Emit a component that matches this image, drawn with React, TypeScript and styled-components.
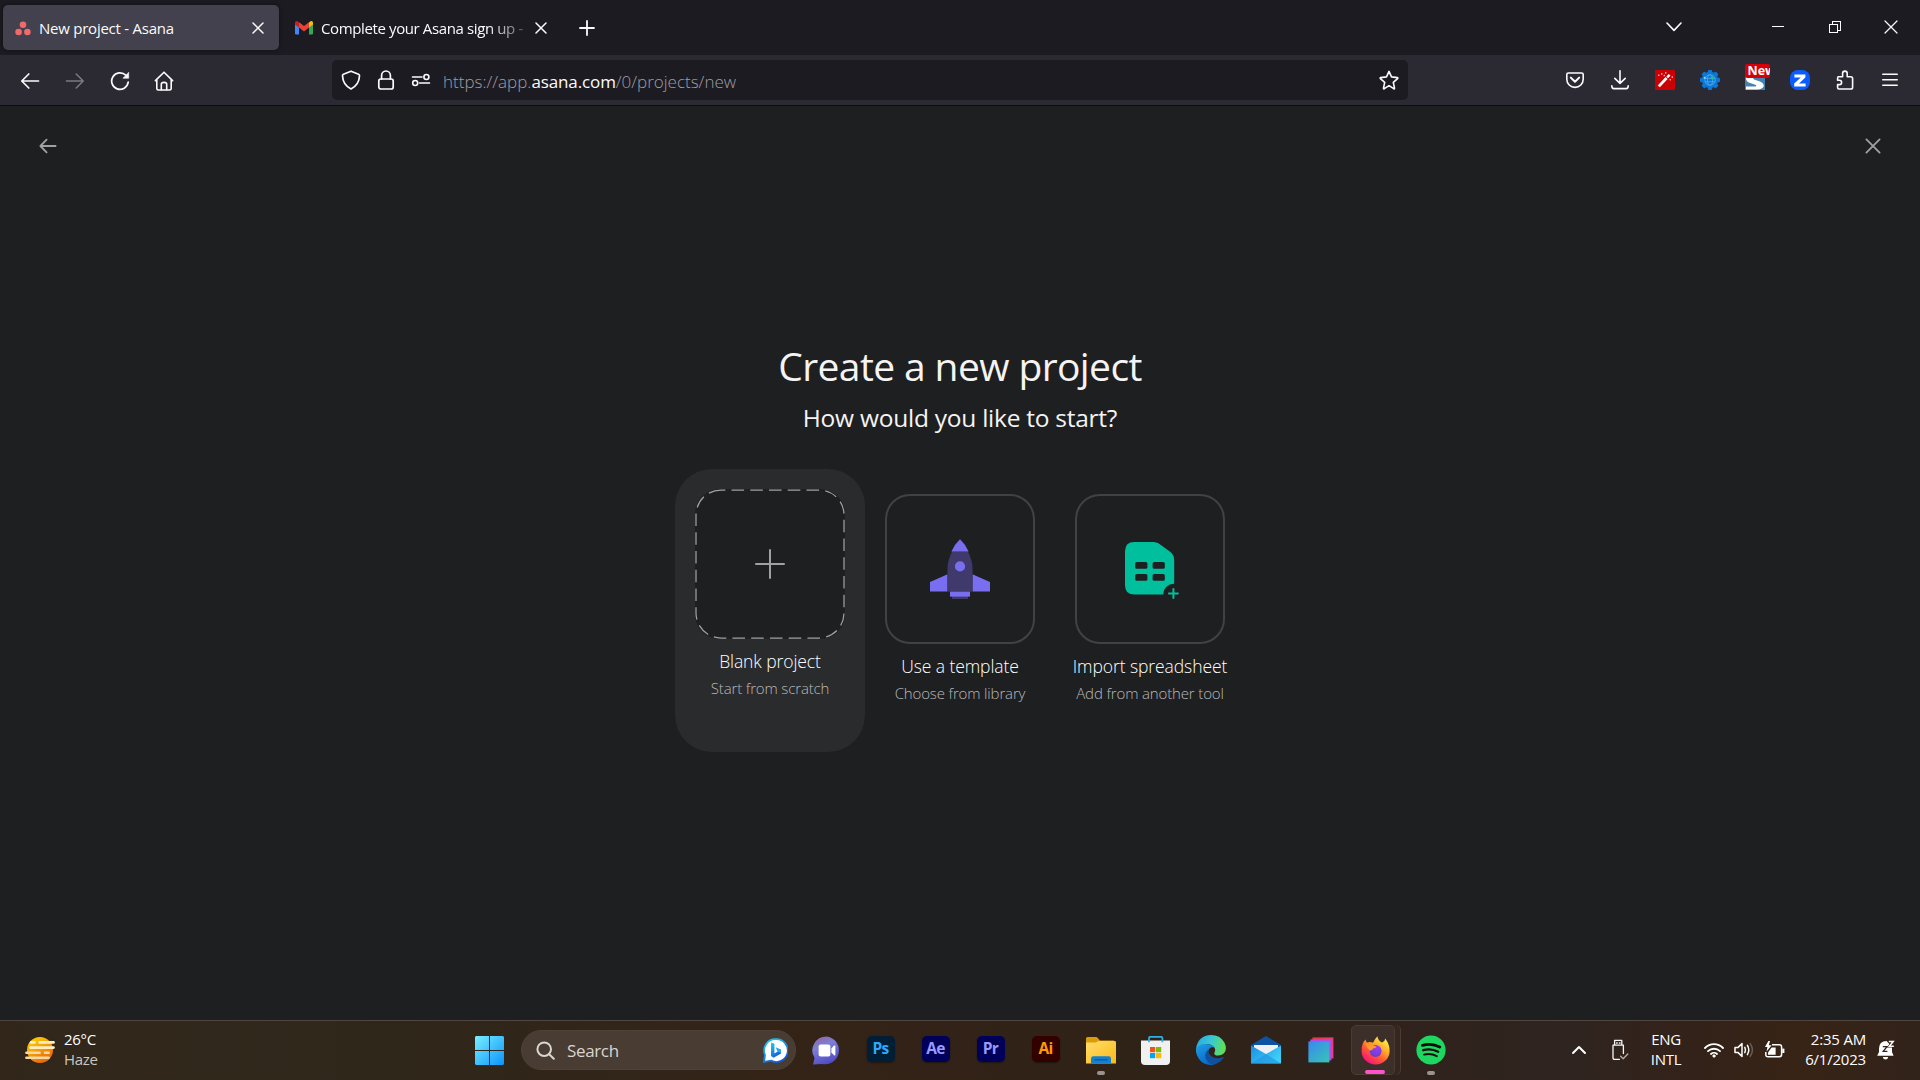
import React from "react";
import styled, { createGlobalStyle } from "styled-components";

const GlobalStyle = createGlobalStyle`
  * { box-sizing: border-box; }
  html, body { margin: 0; padding: 0; background: #1e1f21; }
  body {
    font-family: "Segoe UI", "Open Sans", "Noto Sans", sans-serif;
    color: #f5f4f3;
    overflow: hidden;
  }
  svg { display: block; flex: none; }
`;

const Screen = styled.div`
  width: 1920px;
  height: 1080px;
  display: flex;
  flex-direction: column;
  overflow: hidden;
`;

/* ---------- browser chrome ---------- */

const TabBar = styled.header`
  height: 55px;
  flex: none;
  display: flex;
  align-items: center;
  padding: 0 1px 0 3px;
  background: #1c1b22;
`;

const Tab = styled.div<{ $active?: boolean; $width: number; $inset?: number }>`
  width: ${(p) => p.$width}px;
  height: 45px;
  display: flex;
  align-items: center;
  padding: 0 11px 0 ${(p) => p.$inset ?? 12}px;
  border-radius: 5px;
  background: ${(p) => (p.$active ? "#42414d" : "transparent")};
  box-shadow: ${(p) => (p.$active ? "0 0 4px rgba(0, 0, 0, 0.5)" : "none")};
`;

const TabTitle = styled.span<{ $gap: number; $spacing: number; $fade?: boolean }>`
  flex: 1;
  min-width: 0;
  margin-left: ${(p) => p.$gap}px;
  padding-top: 1px;
  font-size: 15px;
  line-height: 24px;
  letter-spacing: ${(p) => p.$spacing}px;
  color: #fbfbfe;
  white-space: nowrap;
  overflow: hidden;
  mask-image: ${(p) => (p.$fade ? "linear-gradient(to right, #000 80%, transparent 103%)" : "none")};
`;

const ChromeButton = styled.button<{ $width: number; $color?: string }>`
  width: ${(p) => p.$width}px;
  height: 40px;
  flex: none;
  display: flex;
  align-items: center;
  justify-content: center;
  padding: 0;
  border: 0;
  background: none;
  color: ${(p) => p.$color ?? "#fbfbfe"};
`;

const WindowControls = styled.div`
  flex: 1;
  display: flex;
  justify-content: flex-end;
  padding-bottom: 1px;
`;

const Toolbar = styled.nav`
  height: 51px;
  flex: none;
  display: flex;
  align-items: center;
  padding: 0 8px 0 7px;
  background: #2b2a33;
  border-bottom: 1px solid #0c0c0d;
`;

const Navigation = styled.div`
  width: 325px;
  display: flex;
  padding-top: 1px;
`;

const AddressBar = styled.div`
  width: 1076px;
  height: 40px;
  display: flex;
  align-items: center;
  padding: 0 1px 0 1px;
  border-radius: 5px;
  background: #1c1b22;
`;

const Url = styled.span`
  flex: 1;
  margin-left: 5px;
  padding-top: 4px;
  font-size: 17px;
  line-height: 24px;
  font-weight: 300;
  letter-spacing: 0;
  color: #9f9ea5;
  white-space: nowrap;

  b {
    font-weight: 400;
    letter-spacing: -0.12px;
    color: #fbfbfe;
  }
`;

const Extensions = styled.div`
  flex: 1;
  display: flex;
  justify-content: flex-end;
`;

const NewTile = styled.div`
  position: relative;
  width: 20px;
  height: 20px;
`;

const NewBadge = styled.span`
  position: absolute;
  left: 0;
  top: -6px;
  width: 25px;
  height: 14px;
  padding-left: 3px;
  overflow: hidden;
  border-radius: 2px;
  background: #d70007;
  color: #fff;
  font: 700 12.5px/13px "Open Sans", sans-serif;
  text-align: left;
`;

/* ---------- page ---------- */

const Page = styled.main`
  flex: 1;
  display: flex;
  flex-direction: column;
  align-items: center;
  background: #1e1f21;
`;

const PageHeader = styled.div`
  width: 100%;
  height: 80px;
  display: flex;
  justify-content: space-between;
  align-items: center;
  padding: 0 37px 0 38px;
  color: #a2a0a2;
`;

const Title = styled.h1`
  margin: 152px 0 0;
  font-size: 39px;
  line-height: 56px;
  font-weight: 400;
  letter-spacing: -0.6px;
  white-space: nowrap;
`;

const Subtitle = styled.h2`
  margin: 7px 0 0;
  font-size: 24.5px;
  line-height: 34px;
  font-weight: 400;
  letter-spacing: -0.25px;
  white-space: nowrap;
`;

const Options = styled.div`
  display: flex;
  align-items: flex-start;
  margin-top: 39px;
`;

const Option = styled.div<{ $hovered?: boolean }>`
  width: 190px;
  height: 283px;
  display: flex;
  flex-direction: column;
  align-items: center;
  padding-top: 20px;
  margin-top: ${(p) => (p.$hovered ? "-5px" : "0")};
  border-radius: 37px;
  background: ${(p) => (p.$hovered ? "#2a2b2d" : "transparent")};
`;

const Tile = styled.div<{ $outlined?: boolean }>`
  position: relative;
  width: 150px;
  height: 150px;
  display: flex;
  align-items: center;
  justify-content: center;
  border-radius: 25px;
  background: #1e1f21;
  border: ${(p) => (p.$outlined ? "2px solid #424244" : "0")};
`;

const DashedOutline = styled.svg`
  position: absolute;
  inset: 0;
`;

const OptionName = styled.div`
  margin-top: 10px;
  font-size: 17.5px;
  line-height: 24px;
  font-weight: 300;
  color: #fff;
  letter-spacing: -0.08px;
  white-space: nowrap;
`;

const OptionHint = styled.div`
  margin-top: 4px;
  font-size: 15px;
  line-height: 22px;
  font-weight: 300;
  letter-spacing: -0.14px;
  color: #bab8ba;
  white-space: nowrap;
`;

/* ---------- taskbar ---------- */

const Taskbar = styled.footer`
  height: 60px;
  flex: none;
  display: flex;
  align-items: center;
  padding-bottom: 1px;
  border-top: 1px solid #51463f;
  background: linear-gradient(
    90deg,
    #32261a 0,
    #2f281b 250px,
    #30261a 450px,
    #342317 850px,
    #2f2217 1150px,
    #30221c 1400px,
    #2f2420 1560px,
    #332219 1700px,
    #372416 1800px,
    #31221a 1920px
  );
`;

const Weather = styled.div`
  width: 462px;
  display: flex;
  align-items: center;
  padding-left: 25px;
  gap: 9px;
`;

const Stack = styled.div<{ $align?: string; $width?: number; $spacing?: number }>`
  width: ${(p) => (p.$width ? p.$width + "px" : "auto")};
  display: flex;
  flex-direction: column;
  align-items: ${(p) => p.$align ?? "flex-start"};
  padding-bottom: 3px;
  font-size: 15px;
  line-height: 20px;
  letter-spacing: ${(p) => p.$spacing ?? 0}px;
  color: #fff;
  white-space: nowrap;
`;

const Muted = styled.span`
  color: #cbc6c0;
`;

const TaskButton = styled.div<{ $width?: number }>`
  position: relative;
  width: ${(p) => p.$width ?? 55}px;
  height: 50px;
  flex: none;
  display: flex;
  align-items: center;
  justify-content: center;
`;

const SearchBox = styled.div`
  width: 275px;
  height: 40px;
  margin: 0 3px 0 4px;
  flex: none;
  display: flex;
  align-items: center;
  padding: 0 7px 0 14px;
  border-radius: 20px;
  background: #493c32;
  border: 1px solid #4e4238;
  color: #d9d5d0;
  font-size: 17px;
  letter-spacing: -0.35px;

  span {
    flex: 1;
    margin-left: 12px;
  }
`;

const AdobeTile = styled.div<{ $bg: string; $fg: string }>`
  width: 28px;
  height: 26px;
  margin-top: -3px;
  display: flex;
  justify-content: center;
  border-radius: 5px;
  background: ${(p) => p.$bg};
  color: ${(p) => p.$fg};
  box-shadow: 0 1px 2px rgba(0, 0, 0, 0.4);
  font-size: 15.5px;
  line-height: 24px;
  font-weight: 700;
  letter-spacing: -0.6px;
`;

const Indicator = styled.i<{ $active?: boolean }>`
  position: absolute;
  left: ${(p) => (p.$active ? "56%" : "50%")};
  bottom: 0;
  width: ${(p) => (p.$active ? 20 : 8)}px;
  height: 4px;
  transform: translateX(-50%);
  border-radius: 2px;
  background: ${(p) => (p.$active ? "#ff52cb" : "#9b948e")};
`;

const ActiveFrame = styled.div`
  position: relative;
  width: 44px;
  height: 50px;
  margin: 0 8px 0 2px;
  padding-left: 5px;
  display: flex;
  align-items: center;
  justify-content: center;
  border-radius: 5px;
  border: 1px solid #4a3c35;
  background: #3c2f29;
  box-shadow: 5px 0 0 0 #33271f, 6px 0 0 0 #4a3c35;
`;

const Tray = styled.div`
  flex: 1;
  display: flex;
  align-items: center;
  justify-content: flex-end;
  padding-right: 25px;
`;

const TrayIcon = styled.div<{ $gap: number }>`
  margin-right: ${(p) => p.$gap}px;
  flex: none;
`;

/* ---------- line icons ---------- */

type LineProps = { w: number; h?: number; sw?: number; children: React.ReactNode; color?: string };

const Line = ({ w, h = w, sw = 1.6, color = "currentColor", children }: LineProps) => (
  <svg width={w} height={h} viewBox={`0 0 ${w} ${h}`} fill="none" stroke={color} strokeWidth={sw} strokeLinecap="round" strokeLinejoin="round">
    {children}
  </svg>
);

const Cross = ({ size, sw = 1.5 }: { size: number; sw?: number }) => (
  <Line w={size} sw={sw}>
    <path d={`M1 1L${size - 1} ${size - 1}M${size - 1} 1L1 ${size - 1}`} />
  </Line>
);

const ArrowLeft = () => (
  <Line w={20} sw={1.7}>
    <path d="M1.8 10H18.5M8.8 3L1.8 10L8.8 17" />
  </Line>
);

const ArrowRight = () => (
  <Line w={20} sw={1.5}>
    <path d="M1.5 10H18.2M11.2 3L18.2 10L11.2 17" />
  </Line>
);

const Reload = () => (
  <Line w={20} sw={1.7}>
    <path d="M18.2 11.2A8.3 8.3 0 1 1 15.8 4.2" />
    <path d="M18.7 1.6V7.2H13.2Z" fill="currentColor" strokeWidth={0.6} />
  </Line>
);

const Home = () => (
  <Line w={20} sw={1.6}>
    <path d="M1.4 9.6L10 1.2L18.6 9.6M2.8 8.4V17.4Q2.8 19 4.4 19H15.6Q17.2 19 17.2 17.4V8.4" />
    <path d="M7.3 18.8V13.2Q7.3 11.4 10 11.4Q12.7 11.4 12.7 13.2V18.8" />
  </Line>
);

const Shield = () => (
  <Line w={20} sw={1.7}>
    <path d="M10 1.2L17.6 4.2Q18.6 4.6 18.5 5.8Q18.2 14.8 10 19Q1.8 14.8 1.5 5.8Q1.4 4.6 2.4 4.2Z" />
  </Line>
);

const Lock = () => (
  <Line w={20} sw={1.7}>
    <rect x="2.8" y="9" width="14.4" height="10" rx="2" />
    <path d="M5.6 9V5.4A4.4 4.4 0 0 1 14.4 5.4V9" />
  </Line>
);

const Permissions = () => (
  <Line w={20} sw={1.6}>
    <path d="M1.5 7H11M8.5 13H18.5" />
    <circle cx="15.4" cy="7" r="2.5" />
    <circle cx="4.2" cy="13" r="2.5" />
  </Line>
);

const Star = () => (
  <Line w={20} sw={1.6}>
    <path d="M10 1.4L12.5 6.9L18.4 7.6Q19.2 7.9 18.6 8.6L14.3 12.4L15.5 18.2Q15.5 19.1 14.7 18.7L10 15.7L5.3 18.7Q4.5 19.1 4.5 18.2L5.7 12.4L1.4 8.6Q.8 7.9 1.6 7.6L7.5 6.9Z" />
  </Line>
);

const Pocket = () => (
  <Line w={20} sw={1.6}>
    <path d="M3.4 3H16.6Q18.2 3 18.2 4.6V9.2A8.2 8.2 0 0 1 1.8 9.2V4.6Q1.8 3 3.4 3Z" />
    <path d="M5.8 7.6L10 11.8L14.2 7.6" strokeWidth={2} />
  </Line>
);

const Download = () => (
  <Line w={20} sw={1.6}>
    <path d="M10 .8V13.4M4.8 8.4L10 13.4L15.2 8.4M1.8 15.8Q1.8 18.6 3.8 18.6H16.2Q18.2 18.6 18.2 15.8" />
  </Line>
);

const Wand = () => (
  <svg width="20" height="20" viewBox="0 0 20 20">
    <rect width="20" height="20" rx="1" fill="#c90004" />
    <path d="M3.8 16.4L11.6 8" stroke="#fff" strokeWidth="2.8" />
    <path d="M12.2 7.4L14.6 4.8" stroke="#fff" strokeWidth="2.4" />
    <g fill="#fbb">
      <rect x="3" y="4.6" width="1.4" height="1.4" />
      <rect x="6" y="3.2" width="1.4" height="1.4" />
      <rect x="8.6" y="4.8" width="1.4" height="1.4" />
      <rect x="10" y="2.2" width="1.4" height="1.4" />
      <rect x="16.6" y="6.4" width="1.4" height="1.4" />
      <rect x="14.6" y="9" width="1.4" height="1.4" />
    </g>
  </svg>
);

const GearGlobe = () => (
  <svg width="20" height="20" viewBox="0 0 20 20">
    <g fill="#0b77d6">
      <circle cx="10" cy="10" r="8.2" />
      {[0, 45, 90, 135].map((a) => (
        <rect key={a} x="7.8" y="0" width="4.4" height="20" rx="1" transform={`rotate(${a} 10 10)`} />
      ))}
    </g>
    <g fill="none" stroke="#4aa6ea" strokeWidth="0.9">
      <circle cx="10" cy="10" r="5.2" />
      <path d="M4.8 8.4H15.2M4.8 11.8H15.2" />
      <ellipse cx="10" cy="10" rx="2.6" ry="5.2" />
    </g>
    <circle cx="12" cy="7.8" r="1.4" fill="#25c76a" />
    <circle cx="4.6" cy="7.8" r="1" fill="#8fe0ff" />
  </svg>
);

const SurfLetter = () => (
  <svg width="20" height="20" viewBox="0 0 20 20">
    <rect width="20" height="20" fill="#4682b0" />
    <path d="M1 6H19V8H8.6Q7.4 8.4 9 9.6L15 11.6Q19.4 13.4 18.6 16.6Q17.4 19.4 12.6 19.4H1V16.6H10.2Q12.4 16.2 10.4 14.8L4.4 12.8Q.8 11.2 1 8Z" fill="#fff" />
  </svg>
);

const ZBadge = () => (
  <svg width="20" height="20" viewBox="0 0 20 20">
    <rect width="20" height="20" rx="8" fill="#0b5cff" />
    <path d="M4.4 4.4H15.4V7.4L9 13.4H15.6V16.4H4.2V13.4L10.8 7.4H4.4Z" fill="#fff" />
  </svg>
);

const Puzzle = () => (
  <Line w={20} sw={1.6}>
    <path d="M3.4 6.8H7.6V3.4A2.3 2.3 0 0 1 12.2 3.4V6.8H15.8Q17.6 6.8 17.6 8.6V17.2Q17.6 19 15.8 19H4Q2.6 19 2.6 17.6V14.6H4.4A2.2 2.2 0 0 0 4.4 10.2H2.6V8.2Q2.6 6.8 3.4 6.8Z" />
  </Line>
);

const Menu = () => (
  <Line w={20} sw={1.6}>
    <path d="M2.8 4.2H17.2M2.8 9.7H17.2M2.8 15.2H17.2" />
  </Line>
);

/* ---------- page drawings ---------- */

const AsanaMark = () => (
  <svg width="16" height="16" viewBox="0 0 16 16" fill="#f06a6a">
    <circle cx="8" cy="4.8" r="3.3" />
    <circle cx="3.6" cy="12" r="3.3" />
    <circle cx="12.4" cy="12" r="3.3" />
  </svg>
);

const GmailMark = () => (
  <svg width="20" height="16" viewBox="0 0 20 16">
    <path d="M1 2.2V13.2Q1 14.6 2.4 14.6H5V5.4Z" fill="#4285f4" />
    <path d="M19 2.2V13.2Q19 14.6 17.6 14.6H15V5.4Z" fill="#34a853" />
    <path d="M15 2.4V7.6L19 4.6V2.8Q18.8 .4 16.4 1.2Z" fill="#fbbc04" />
    <path d="M5 2.4V7.6L1 4.6V2.8Q1.2 .4 3.6 1.2Z" fill="#c5221f" />
    <path d="M5 2.2L10 6L15 2.2V7.6L10 11.4L5 7.6Z" fill="#ea4335" />
  </svg>
);

const Rocket = () => (
  <svg width="60" height="60" viewBox="0 0 60 60">
    <path d="M17.6 35.2L0 43V52.4H17.6ZM42.4 35.2L60 43V52.4H42.4Z" fill="#796eef" />
    <path d="M22 12.4H38Q42.6 22 42.6 30V52.4H17.4V30Q17.4 22 22 12.4Z" fill="#3f3a6b" />
    <path d="M30 .2Q35.6 5.4 38.6 12.4H21.4Q24.4 5.4 30 .2Z" fill="#796eef" />
    <circle cx="30" cy="27.4" r="5.1" fill="#796eef" />
    <rect x="22" y="57" width="16" height="3" fill="#3f3a6b" />
    <rect x="20" y="52.6" width="20" height="5" fill="#796eef" />
  </svg>
);

const Spreadsheet = () => (
  <svg width="60" height="60" viewBox="0 0 60 60">
    <path d="M14.4 3H33.6Q36.6 3 38.8 4.6L49.8 12.4Q54.2 15.8 54.2 20.4V44.8A10.4 10.4 0 0 0 43.4 55.6H14.4Q5 55.6 5 46.2V12.4Q5 3 14.4 3Z" fill="#00bf9c" />
    <g fill="#1e1f21">
      <rect x="15.2" y="23" width="12.2" height="6.8" rx="1.6" />
      <rect x="32.6" y="23" width="12.2" height="6.8" rx="1.6" />
      <rect x="15.2" y="35" width="12.2" height="6.8" rx="1.6" />
      <rect x="32.6" y="35" width="12.2" height="6.8" rx="1.6" />
    </g>
    <path d="M53.4 50V59M48.9 54.5H57.9" stroke="#00bf9c" strokeWidth="2" strokeLinecap="round" />
  </svg>
);

/* ---------- taskbar drawings ---------- */

const HazeIcon = () => (
  <svg width="30" height="30" viewBox="0 0 30 30">
    <defs>
      <linearGradient id="sun" x1="0.2" y1="0" x2="0.8" y2="1">
        <stop offset="0.1" stopColor="#fcc607" />
        <stop offset="1" stopColor="#ea5c0b" />
      </linearGradient>
    </defs>
    <circle cx="15" cy="15" r="13" fill="url(#sun)" />
    <g strokeWidth="2.6" strokeLinecap="round">
      <path d="M6 7.4H9.6M14.6 7.4H28.6M5.4 12.6H28.6" stroke="#fdeec2" />
      <path d="M1.4 17.8H14.6M20 17.8H23.6M1.4 22.8H23.6" stroke="#f3d9a4" />
    </g>
  </svg>
);

const WindowsLogo = () => (
  <svg width="29" height="29" viewBox="0 0 29 29">
    <defs>
      <linearGradient id="win" x1="0" y1="0" x2="1" y2="1">
        <stop offset="0" stopColor="#78eeff" />
        <stop offset="1" stopColor="#0a94fb" />
      </linearGradient>
    </defs>
    <path d="M1 0H14V14H0V1ZM15 0H28L29 1V14H15ZM0 15H14V29H1L0 28ZM15 15H29V28L28 29H15Z" fill="url(#win)" />
  </svg>
);

const SearchGlass = () => (
  <Line w={19} sw={2}>
    <circle cx="8.2" cy="8.2" r="6.8" />
    <path d="M13.2 13.2L17.8 17.8" />
  </Line>
);

const BingIcon = () => (
  <svg width="25" height="25" viewBox="0 0 25 25">
    <defs>
      <linearGradient id="bing" x1="0" y1="0" x2="0.6" y2="1">
        <stop offset="0" stopColor="#1fd0ec" />
        <stop offset="1" stopColor="#1559d6" />
      </linearGradient>
    </defs>
    <path d="M12.6 1.2A11.4 11.4 0 1 1 8 22.6L1 24L2 17A11.4 11.4 0 0 1 12.6 1.2Z" fill="#fff" stroke="url(#bing)" strokeWidth="1.8" />
    <path d="M8 4.4L11.4 5.8V15.4L18 11.6V15.6L10.6 19.8L8 18Z" fill="url(#bing)" />
    <path d="M12.8 9.2L18 11.6V15L14.4 13.4Z" fill="#2aa6ee" />
  </svg>
);

const ChatIcon = () => (
  <svg width="29" height="29" viewBox="0 0 29 29">
    <defs>
      <linearGradient id="chat" x1="0.2" y1="0" x2="0.6" y2="1">
        <stop offset="0" stopColor="#94659f" />
        <stop offset="0.35" stopColor="#7c7fd8" />
        <stop offset="1" stopColor="#4f49c4" />
      </linearGradient>
    </defs>
    <path d="M14.5 .4A14 14 0 1 1 10 28L1 28.4L2.6 22A14 14 0 0 1 14.5 .4Z" fill="url(#chat)" />
    <rect x="6.6" y="8.4" width="11.8" height="12" rx="2" fill="#fff" />
    <path d="M19.4 12.4L22 9.6Q23.4 9 23.4 10.4V18.4Q23.4 19.8 22 19.2L19.4 16.4Z" fill="#fff" />
  </svg>
);

const FolderIcon = () => (
  <svg width="30" height="27" viewBox="0 0 30 27">
    <defs>
      <linearGradient id="fold" x1="0" y1="0" x2="1" y2="1">
        <stop offset="0" stopColor="#ffdd6b" />
        <stop offset="1" stopColor="#fbb917" />
      </linearGradient>
    </defs>
    <path d="M0 1.6Q0 0 1.6 0H10Q11 0 12 1.2L14 3.6H28V10H0Z" fill="#dc9b09" />
    <path d="M0 5.6H9.6L12.6 4H28.6Q30 4 30 5.4V26.6H0Z" fill="url(#fold)" />
    <path d="M5 26.6V21.6Q5 19.2 7.4 19.2H22.6Q25 19.2 25 21.6V26.6Z" fill="#1380d0" />
    <path d="M8.6 22.8H21.4" stroke="#0a5aa4" strokeWidth="1.4" />
  </svg>
);

const StoreIcon = () => (
  <svg width="29" height="29" viewBox="0 0 29 29">
    <path d="M0 4.4H29V25Q29 29 25 29H4Q0 29 0 25Z" fill="#f1f1f1" />
    <path d="M8 6.2V2Q8 .8 9.2 .8H20.2Q21.4 .8 21.4 2V6.2" fill="none" stroke="#29b2ea" strokeWidth="1.7" />
    <rect x="9" y="11" width="5.2" height="5.2" fill="#f25022" />
    <rect x="15" y="11" width="5.2" height="5.2" fill="#7fba00" />
    <rect x="9" y="17" width="5.2" height="5.2" fill="#00a4ef" />
    <rect x="15" y="17" width="5.2" height="5.2" fill="#ffb900" />
  </svg>
);

const EdgeIcon = () => (
  <svg width="30" height="30" viewBox="0 0 30 30">
    <defs>
      <linearGradient id="edgeA" x1="0" y1="0.3" x2="1" y2="0.5">
        <stop offset="0" stopColor="#2aa9e6" />
        <stop offset="0.5" stopColor="#37c9d2" />
        <stop offset="1" stopColor="#62e04f" />
      </linearGradient>
      <linearGradient id="edgeB" x1="0" y1="0" x2="0.5" y2="1">
        <stop offset="0" stopColor="#1f9fe4" />
        <stop offset="1" stopColor="#0669cc" />
      </linearGradient>
    </defs>
    <path d="M.4 11.6Q3.4 0 15.2 0Q24 0 28.4 7.4Q31.6 14.2 28 18.2Q25 21 20.4 20.4Q17.4 19.6 18.6 17.2Q20 14.6 18 12Q14 8 8 9.4Q2.4 11 0 17Z" fill="url(#edgeA)" />
    <path d="M0 15.4Q1.4 9.4 8.4 9Q15.2 8.8 18 12.4Q13 11.4 12 17Q12 23.4 19 27Q22 28.4 17.4 29.8Q8 31 3 24Q-.4 19.4 0 15.4Z" fill="url(#edgeB)" />
    <path d="M12.4 14.2Q6.4 19.6 11.4 26.2Q14.6 29.8 17.2 29.8Q24 28.8 27.8 22.6Q28 21.6 27 22Q20.8 24.8 15.8 21.6Q11.8 18.6 12.4 14.2Z" fill="#10509c" />
  </svg>
);

const MailIcon = () => (
  <svg width="30" height="28" viewBox="0 0 30 28">
    <defs>
      <linearGradient id="mail" x1="0" y1="0" x2="1" y2="0.6">
        <stop offset="0" stopColor="#1b8de0" />
        <stop offset="1" stopColor="#3fd0f8" />
      </linearGradient>
    </defs>
    <path d="M0 9L15 0L30 9V14H0Z" fill="#0c53a3" />
    <path d="M3 9H27V16L15 20L3 16Z" fill="#f0f0f2" />
    <path d="M0 9.6L15 18L30 9.6V27.6H0Z" fill="url(#mail)" />
    <path d="M0 27.6L15 18L30 27.6Z" fill="#2196e2" opacity="0.65" />
  </svg>
);

const LayersIcon = () => (
  <svg width="26" height="26" viewBox="0 0 26 26">
    <defs>
      <linearGradient id="lay" x1="0" y1="0" x2="0.8" y2="1">
        <stop offset="0" stopColor="#3b87f0" />
        <stop offset="1" stopColor="#36c0ba" />
      </linearGradient>
      <linearGradient id="layBack" x1="0" y1="0" x2="1" y2="0.6">
        <stop offset="0" stopColor="#e13a3f" />
        <stop offset="1" stopColor="#ec3a92" />
      </linearGradient>
    </defs>
    <rect x="4.4" y="0.4" width="21" height="21" fill="url(#layBack)" />
    <rect x="2.4" y="2.4" width="21" height="21" fill="#b34be6" />
    <rect x="0.4" y="4.4" width="21" height="21" fill="url(#lay)" />
  </svg>
);

const FirefoxIcon = () => (
  <svg width="29" height="29" viewBox="0 0 29 29">
    <defs>
      <linearGradient id="fx" x1="0.85" y1="0.1" x2="0.25" y2="0.95">
        <stop offset="0" stopColor="#fff04a" />
        <stop offset="0.35" stopColor="#ffa72b" />
        <stop offset="0.65" stopColor="#ff5536" />
        <stop offset="1" stopColor="#f9137c" />
      </linearGradient>
      <radialGradient id="fxGlobe" cx="0.6" cy="0.2" r="0.9">
        <stop offset="0" stopColor="#a33cf0" />
        <stop offset="1" stopColor="#5a3fd0" />
      </radialGradient>
    </defs>
    <path d="M1.8 7.6Q2.8 4.6 4.6 3.4Q4.8 5.4 6 6.4Q9.6 5.6 12 6.8Q13.4 3.4 16.4 .2Q17 4.4 21 6.6Q24.4 4.6 24.2 2.4Q28.8 8.4 28.6 15A14 13.6 0 0 1 .6 15Q.4 11 1.8 7.6Z" fill="url(#fx)" />
    <circle cx="14.6" cy="15" r="6" fill="url(#fxGlobe)" />
    <path d="M4.6 8Q9.6 7 12 9.4L15.4 10.4Q14.8 12.2 12 12.4Q11.6 14.6 8.8 14.4Q6 12 4.6 8Z" fill="#ff9a2c" />
  </svg>
);

const SpotifyIcon = () => (
  <svg width="30" height="30" viewBox="0 0 30 30">
    <circle cx="15" cy="15" r="14.6" fill="#1ed760" />
    <g fill="none" stroke="#100d09" strokeLinecap="round">
      <path d="M6.4 10.4Q15.6 7.6 23.8 12" strokeWidth="2.8" />
      <path d="M7.2 15.2Q15 13 22.2 16.8" strokeWidth="2.3" />
      <path d="M8 19.6Q14.6 17.8 20.8 21.2" strokeWidth="1.9" />
    </g>
  </svg>
);

const UsbIcon = () => (
  <Line w={18} h={22} sw={1.3} color="#f8f6f4">
    <path d="M3.6 6.2V1.4H10.8V6.2M2 6.2H12.4V14.6M8.4 20.4H3.6Q2 20.4 2 18.8V6.2" />
    <path d="M5.6 3.9H6.2M8.4 3.9H9" strokeWidth="1.5" />
    <path d="M9.6 17.2L12.2 19.8L16.8 15" stroke="#b5ada9" />
  </Line>
);

const WifiIcon = () => (
  <Line w={20} h={16} sw={1.8} color="#fff">
    <path d="M1 6A12.6 12.6 0 0 1 19 6M4 9.2A8.6 8.6 0 0 1 16 9.2M7 12A4.4 4.4 0 0 1 13 12" />
    <circle cx="10" cy="14" r="1.2" fill="#fff" strokeWidth="0.8" />
  </Line>
);

const VolumeIcon = () => (
  <Line w={20} h={16} sw={1.5} color="#fff">
    <path d="M1 5.6H3.8L8 1.6V14.4L3.8 10.4H1Z" />
    <path d="M10.8 5.4Q12.2 8 10.8 10.6M13.4 3.4Q16.2 8 13.4 12.6" />
    <path d="M16.2 1.6Q20.6 8 16.2 14.4" stroke="#6b5d55" />
  </Line>
);

const BatteryIcon = () => (
  <svg width="21" height="18" viewBox="0 0 21 18">
    <path d="M8 3.8H15.4Q17.6 3.8 17.6 6V13.6Q17.6 15.8 15.4 15.8H4Q1.8 15.8 1.8 13.6V11" fill="none" stroke="#fff" strokeWidth="1.5" />
    <path d="M4 13.8V11.6L7.6 6.6H11.6V13.8Z" fill="#fff" />
    <path d="M18.2 7.6H20.4V12H18.2Z" fill="#fff" />
    <path d="M4.4 0L1 6H3.4L2.6 10.4L7.6 4.2H4.8L6 0Z" fill="#fff" />
  </svg>
);

const BellIcon = () => (
  <svg width="18" height="20" viewBox="0 0 18 20">
    <path d="M9.6 1Q2 1.4 2 8.4V12L.2 15.8H16.6L15 12V7Z" fill="#fff" />
    <path d="M5.8 17H11.2Q10.8 19.6 8.5 19.6Q6.2 19.6 5.8 17Z" fill="#fff" />
    <path d="M5.8 6.6H10L6.2 11.4H10.4" fill="none" stroke="#35251a" strokeWidth="1.3" />
    <path d="M11.8 1.4H16.2L12.4 6.2H16.6" fill="none" stroke="#35251a" strokeWidth="2.6" />
    <path d="M11.8 1.4H16.2L12.4 6.2H16.8" fill="none" stroke="#fff" strokeWidth="1.5" />
  </svg>
);

export default function App() {
  return (
    <>
      <GlobalStyle />
      <Screen>
        <TabBar>
          <Tab $active $width={276}>
            <AsanaMark />
            <TabTitle $gap={8} $spacing={-0.24}>New project - Asana</TabTitle>
            <ChromeButton $width={20}><Cross size={12} /></ChromeButton>
          </Tab>
          <Tab $width={283} $inset={15}>
            <GmailMark />
            <TabTitle $gap={7} $spacing={-0.38} $fade>Complete your Asana sign up -</TabTitle>
            <ChromeButton $width={21}><Cross size={12} /></ChromeButton>
          </Tab>
          <ChromeButton $width={50}>
            <Line w={16} sw={1.8}><path d="M8 1V15M1 8H15" /></Line>
          </ChromeButton>
          <WindowControls>
            <ChromeButton $width={58}>
              <Line w={16} sw={1.6}><path d="M1 4L8 11.4L15 4" /></Line>
            </ChromeButton>
            <ChromeButton $width={46} />
            <ChromeButton $width={57}>
              <svg width="12" height="12" viewBox="0 0 12 12"><rect y="5" width="12" height="1" fill="#fbfbfe" /></svg>
            </ChromeButton>
            <ChromeButton $width={57}>
              <svg width="12" height="12" viewBox="0 0 12 12" fill="none" stroke="#fbfbfe" shapeRendering="crispEdges">
                <path d="M.5 3.5H8.5V11.5H.5ZM3.5 3.5V.5H11.5V9.5H8.5" />
              </svg>
            </ChromeButton>
            <ChromeButton $width={56}><Cross size={14} sw={1.2} /></ChromeButton>
          </WindowControls>
        </TabBar>

        <Toolbar>
          <Navigation>
            <ChromeButton $width={45}><ArrowLeft /></ChromeButton>
            <ChromeButton $width={45} $color="#7b7a82"><ArrowRight /></ChromeButton>
            <ChromeButton $width={45}><Reload /></ChromeButton>
            <ChromeButton $width={44}><Home /></ChromeButton>
          </Navigation>
          <AddressBar>
            <ChromeButton $width={36}><Shield /></ChromeButton>
            <ChromeButton $width={34}><Lock /></ChromeButton>
            <ChromeButton $width={35}><Permissions /></ChromeButton>
            <Url>https://app.<b>asana.com</b>/0/projects/new</Url>
            <ChromeButton $width={36}><Star /></ChromeButton>
          </AddressBar>
          <Extensions>
            <ChromeButton $width={45}><Pocket /></ChromeButton>
            <ChromeButton $width={45}><Download /></ChromeButton>
            <ChromeButton $width={45}><Wand /></ChromeButton>
            <ChromeButton $width={45}><GearGlobe /></ChromeButton>
            <ChromeButton $width={45}>
              <NewTile>
                <SurfLetter />
                <NewBadge>New</NewBadge>
              </NewTile>
            </ChromeButton>
            <ChromeButton $width={45}><ZBadge /></ChromeButton>
            <ChromeButton $width={45}><Puzzle /></ChromeButton>
            <ChromeButton $width={45}><Menu /></ChromeButton>
          </Extensions>
        </Toolbar>

        <Page>
          <PageHeader>
            <Line w={20} sw={1.8}><path d="M2.4 10H17.6M8.6 3.6L2.4 10L8.6 16.4" /></Line>
            <Line w={20} sw={1.8}><path d="M3.4 3.4L16.6 16.6M16.6 3.4L3.4 16.6" /></Line>
          </PageHeader>
          <Title>Create a new project</Title>
          <Subtitle>How would you like to start?</Subtitle>
          <Options>
            <Option $hovered>
              <Tile>
                <DashedOutline width="150" height="150" viewBox="0 0 150 150">
                  <rect x="1" y="1" width="148" height="148" rx="25" fill="none" stroke="#a2a0a2" strokeWidth="1.25" strokeDasharray="12.6 6.15" strokeDashoffset="8.25" />
                </DashedOutline>
                <Line w={32} sw={2} color="#a2a0a2"><path d="M16 2V30M2 16H30" /></Line>
              </Tile>
              <OptionName>Blank project</OptionName>
              <OptionHint>Start from scratch</OptionHint>
            </Option>
            <Option>
              <Tile $outlined><Rocket /></Tile>
              <OptionName>Use a template</OptionName>
              <OptionHint>Choose from library</OptionHint>
            </Option>
            <Option>
              <Tile $outlined><Spreadsheet /></Tile>
              <OptionName>Import spreadsheet</OptionName>
              <OptionHint>Add from another tool</OptionHint>
            </Option>
          </Options>
        </Page>

        <Taskbar>
          <Weather>
            <HazeIcon />
            <Stack $spacing={-0.3}>
              <span>26°C</span>
              <Muted>Haze</Muted>
            </Stack>
          </Weather>
          <TaskButton><WindowsLogo /></TaskButton>
          <SearchBox>
            <SearchGlass />
            <span>Search</span>
            <BingIcon />
          </SearchBox>
          <TaskButton $width={54}><ChatIcon /></TaskButton>
          <TaskButton><AdobeTile $bg="#001e36" $fg="#31a8ff">Ps</AdobeTile></TaskButton>
          <TaskButton><AdobeTile $bg="#00005b" $fg="#9999ff">Ae</AdobeTile></TaskButton>
          <TaskButton><AdobeTile $bg="#00005b" $fg="#9999ff">Pr</AdobeTile></TaskButton>
          <TaskButton><AdobeTile $bg="#330000" $fg="#ff9a00">Ai</AdobeTile></TaskButton>
          <TaskButton><FolderIcon /><Indicator /></TaskButton>
          <TaskButton><StoreIcon /></TaskButton>
          <TaskButton><EdgeIcon /></TaskButton>
          <TaskButton><MailIcon /></TaskButton>
          <TaskButton><LayersIcon /></TaskButton>
          <TaskButton>
            <ActiveFrame><FirefoxIcon /><Indicator $active /></ActiveFrame>
          </TaskButton>
          <TaskButton><SpotifyIcon /><Indicator /></TaskButton>
          <Tray>
            <TrayIcon $gap={24}>
              <Line w={16} h={10} sw={2} color="#fff"><path d="M2 8L8 2L14 8" /></Line>
            </TrayIcon>
            <TrayIcon $gap={20}><UsbIcon /></TrayIcon>
            <Stack $align="center" $width={34} $spacing={-0.3}><span>ENG</span><span>INTL</span></Stack>
            <TrayIcon $gap={21}><span /></TrayIcon>
            <TrayIcon $gap={10}><WifiIcon /></TrayIcon>
            <TrayIcon $gap={10}><VolumeIcon /></TrayIcon>
            <TrayIcon $gap={13}><BatteryIcon /></TrayIcon>
            <Stack $align="flex-end" $width={68} $spacing={-0.2}><span>2:35 AM</span><span>6/1/2023</span></Stack>
            <TrayIcon $gap={11}><span /></TrayIcon>
            <BellIcon />
          </Tray>
        </Taskbar>
      </Screen>
    </>
  );
}
